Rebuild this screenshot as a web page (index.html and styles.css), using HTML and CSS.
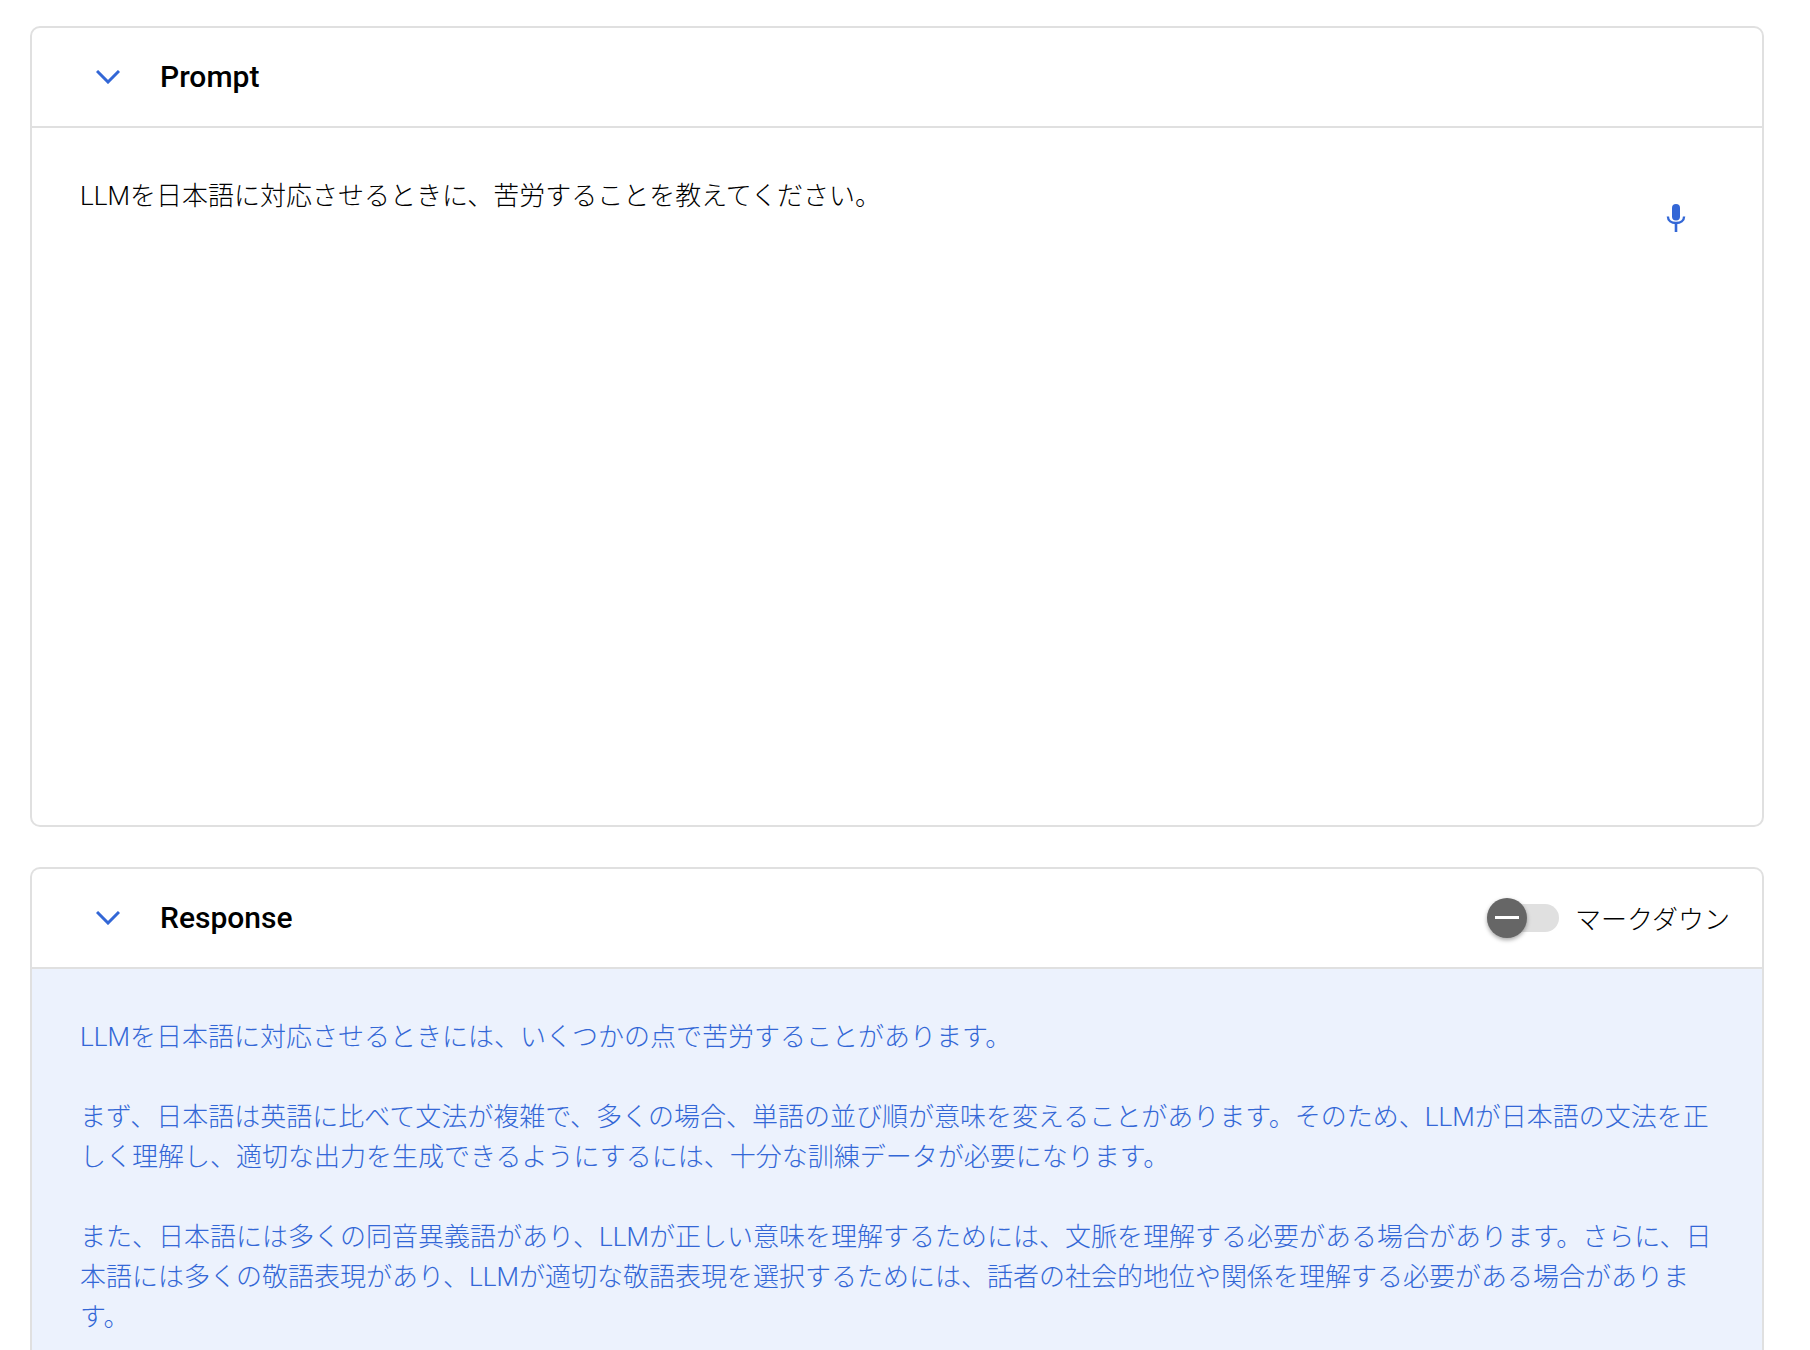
FILE: index.html
```html
<!DOCTYPE html>
<html lang="ja">
<head>
    <meta charset="UTF-8">
    <title>Prompt</title>
    <link rel="stylesheet" href="styles.css">
</head>
<body>

    <!-- Prompt -->
    <section class="card prompt-card">
        <div class="card-header">
            <svg class="chevron" viewBox="0 0 24 14" width="24" height="14"><path d="M1 1 12 12 23 1" fill="none" stroke="#3367d6" stroke-width="3"/></svg>
            <h2>Prompt</h2>
        </div>
        <div class="prompt-body">
            <p>LLMを日本語に対応させるときに、苦労することを教えてください。</p>
            <svg class="mic" viewBox="0 0 24 32" width="24" height="32">
                <rect x="8" y="2" width="8" height="16.500" rx="4" fill="#3367d6"/>
                <path d="M3.900 14.500C3.900 18.500 7.500 21 12 21S20.100 18.500 20.100 14.500" fill="none" stroke="#3367d6" stroke-width="2.400"/>
                <path d="M12 21V30" fill="none" stroke="#3367d6" stroke-width="2.600"/>
            </svg>
        </div>
    </section>

    <!-- Response -->
    <section class="card response-card">
        <div class="card-header">
            <svg class="chevron" viewBox="0 0 24 14" width="24" height="14"><path d="M1 1 12 12 23 1" fill="none" stroke="#3367d6" stroke-width="3"/></svg>
            <h2>Response</h2>
            <div class="toggle">
                <span class="toggle-track"><span class="toggle-thumb"></span></span>
                <span class="toggle-label">マークダウン</span>
            </div>
        </div>
        <div class="response-body">
            <p>LLMを日本語に対応させるときには、いくつかの点で苦労することがあります。</p>
            <p>まず、日本語は英語に比べて文法が複雑で、多くの場合、単語の並び順が意味を変えることがあります。そのため、LLMが日本語の文法を正しく理解し、適切な出力を生成できるようにするには、十分な訓練データが必要になります。</p>
            <p>また、日本語には多くの同音異義語があり、LLMが正しい意味を理解するためには、文脈を理解する必要がある場合があります。さらに、日本語には多くの敬語表現があり、LLMが適切な敬語表現を選択するためには、話者の社会的地位や関係を理解する必要がある場合があります。</p>
        </div>
    </section>

</body>
</html>
```

FILE: styles.css
```css
html, body {
    height: 1350px;
    overflow: hidden;
}

body {
    display: flex;
    flex-direction: column;
    box-sizing: border-box;
    margin: 0;
    padding: 26px 46px 0 30px;
    background-color: #fff;
    color: #000;
    font-family: Roboto, "Noto Sans CJK JP", sans-serif;
}

.card {
    border: 2px solid #e0e0e0;
    border-radius: 10px;
    overflow: hidden;
}

.prompt-card {
    flex: none;
    height: 801px;
    box-sizing: border-box;
    margin-bottom: 40px;
}

.response-card {
    flex: 1;
    min-height: 0;
    display: flex;
    flex-direction: column;
    border-bottom: none;
    border-bottom-left-radius: 0;
    border-bottom-right-radius: 0;
}

.card-header {
    flex: none;
    display: flex;
    align-items: center;
    height: 98px;
    padding: 0 32px 0 64px;
    border-bottom: 2px solid #e0e0e0;
}

.card-header h2 {
    margin: 0 0 2px 40px;
    font-size: 30px;
    font-weight: 500;
}

.prompt-body {
    display: flex;
    justify-content: space-between;
    align-items: flex-start;
    padding: 48px 74px 0 48px;
}

.prompt-body p, .response-body p {
    margin: 0;
    font-size: 26px;
    font-weight: 300;
    line-height: 40px;
}

.mic {
    margin-top: 26px;
}

.toggle {
    display: flex;
    align-items: center;
    gap: 16px;
    margin-left: auto;
}

.toggle-track {
    position: relative;
    display: block;
    width: 72px;
    height: 28px;
    border-radius: 14px;
    background-color: #e0e0e0;
}

.toggle-thumb {
    position: absolute;
    top: -6px;
    left: 0;
    width: 40px;
    height: 40px;
    border-radius: 50%;
    background-color: #666;
    box-shadow: 0 2px 4px rgba(0, 0, 0, 0.35);
}

.toggle-thumb::after {
    content: "";
    position: absolute;
    top: 18px;
    left: 8px;
    width: 24px;
    height: 3px;
    background-color: #fff;
}

.toggle-label {
    margin-bottom: 2px;
    font-size: 26px;
    font-weight: 300;
}

.response-body {
    flex: 1;
    min-height: 0;
    padding: 48px 48px 0;
    background-color: #ecf2fd;
    color: #3367d6;
}

.response-body p {
    margin-bottom: 40px;
}
```
